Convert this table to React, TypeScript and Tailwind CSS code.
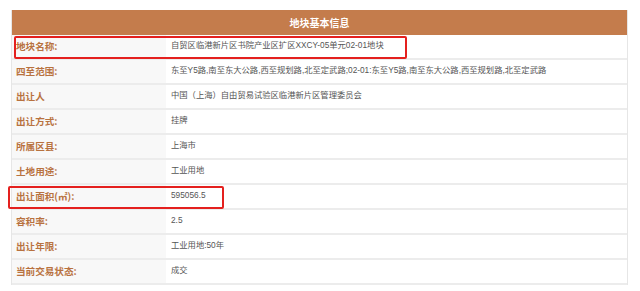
const rows: { label: string; value: string; mark?: "name" | "area" }[] = [
  { label: "地块名称:", value: "自贸区临港新片区书院产业区扩区XXCY-05单元02-01地块", mark: "name" },
  {
    label: "四至范围:",
    value:
      "东至Y5路,南至东大公路,西至规划路,北至定武路;02-01:东至Y5路,南至东大公路,西至规划路,北至定武路",
  },
  { label: "出让人", value: "中国（上海）自由贸易试验区临港新片区管理委员会" },
  { label: "出让方式:", value: "挂牌" },
  { label: "所属区县:", value: "上海市" },
  { label: "土地用途:", value: "工业用地" },
  { label: "出让面积(㎡):", value: "595056.5", mark: "area" },
  { label: "容积率:", value: "2.5" },
  { label: "出让年限:", value: "工业用地:50年" },
  { label: "当前交易状态:", value: "成交" },
];

export default function App() {
  return (
    <div
      className="h-[291px] w-[640px] bg-white pl-[11px] pt-[10px]"
      style={{ fontFamily: '"Noto Sans CJK SC", "Liberation Sans", sans-serif' }}
    >
      <div className="w-[617px] border-x border-[#e6e6e6]">
        <div className="flex h-[25px] items-center justify-center bg-[#c47c4c] text-[10px] font-bold text-white">
          地块基本信息
        </div>
        {rows.map((row) => (
          <div
            key={row.label}
            className="relative flex h-[25px] border-b-2 border-[#ececec]"
          >
            <div className="flex w-[154px] items-center bg-[#f8f8f8] pl-[4px] text-[9.6px] font-bold text-[#b8723f]">
              {row.label}
            </div>
            <div className="flex flex-1 items-center pb-[2px] pl-[5px] font-['Liberation_Sans','Noto_Sans_CJK_SC',sans-serif] text-[8.3px] text-[#555]">
              {row.value}
            </div>
            {row.mark === "name" && (
              <div className="absolute left-[2px] top-[1px] h-[23px] w-[393px] rounded-[2px] border-2 border-[#e4201e]" />
            )}
            {row.mark === "area" && (
              <div className="absolute -left-[4px] top-[1px] h-[23px] w-[216px] rounded-[2px] border-2 border-[#e4201e]" />
            )}
          </div>
        ))}
      </div>
    </div>
  );
}
